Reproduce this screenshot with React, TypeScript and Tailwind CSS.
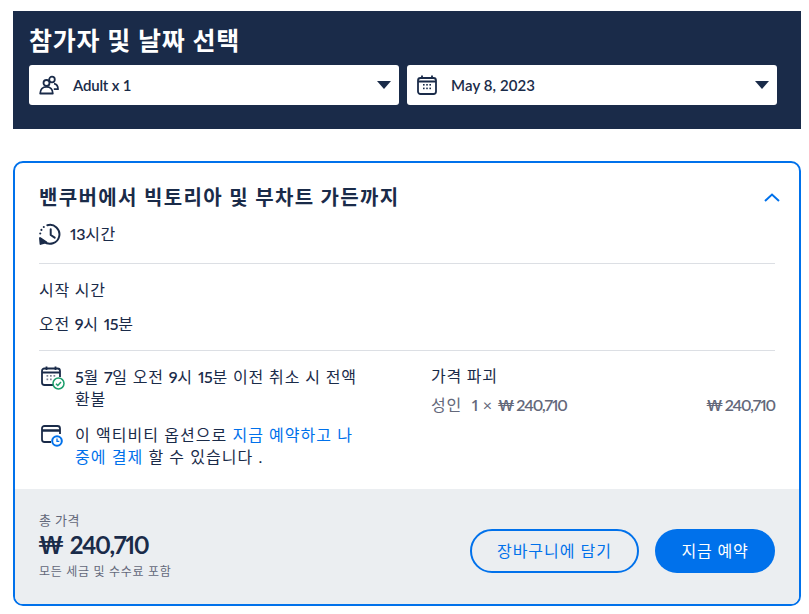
const font = "font-['Lato','Noto_Sans_CJK_KR',sans-serif]";

function N({ children }: { children: React.ReactNode }) {
  return <span className="font-semibold tracking-[-0.3px] proportional-nums">{children}</span>;
}

function Money() {
  return <span className="font-semibold tracking-[-1.15px] proportional-nums">₩ 240,710</span>;
}

function Caret() {
  return (
    <svg width="14" height="8" viewBox="0 0 14 8" className="ml-auto shrink-0">
      <path d="M0 0H14L7 8Z" fill="#1a2b49" />
    </svg>
  );
}

function People() {
  return (
    <svg width="20" height="20" viewBox="0 0 20 20" fill="none" stroke="#1a2b49" strokeWidth="1.8">
      <circle cx="7.5" cy="8" r="3" />
      <circle cx="13" cy="4.5" r="2.8" />
      <path d="M1.200 18.500c0-4 2.500-6.600 6.300-6.600s6.300 2.600 6.300 6.600z" strokeLinejoin="round" />
      <path d="M15 8.700c2.400.4 4 2.400 4 5.500h-4.200" strokeLinejoin="round" />
    </svg>
  );
}

function Calendar() {
  return (
    <svg width="20" height="20" viewBox="0 0 20 20" fill="none" stroke="#1a2b49" strokeWidth="1.800">
      <rect x="1" y="3" width="18" height="16" rx="2.500" />
      <path d="M5 0.500V4M15 0.500V4M1 6.500H19" />
      <g fill="#1a2b49" stroke="none">
        <rect x="6" y="9" width="1.600" height="1.600" />
        <rect x="9.200" y="9" width="1.600" height="1.600" />
        <rect x="12.400" y="9" width="1.600" height="1.600" />
        <rect x="6" y="12.600" width="1.600" height="1.600" />
        <rect x="9.200" y="12.600" width="1.600" height="1.600" />
        <rect x="12.400" y="12.600" width="1.600" height="1.600" />
      </g>
    </svg>
  );
}

function History() {
  return (
    <svg width="23" height="23" viewBox="0 0 22 22" fill="none" stroke="#1a2b49" strokeWidth="1.900">
      <path d="M8 2.200A9 9 0 1 1 4.600 17.600" strokeLinecap="round" />
      <path d="M11.200 6V11.500L15 14" strokeLinecap="round" strokeLinejoin="round" />
      <path d="M1 14.500L1.500 20L7 18.500Z" strokeLinejoin="round" fill="#1a2b49" />
      <g fill="#1a2b49" stroke="none">
        <circle cx="4.600" cy="3.800" r="1" />
        <circle cx="2.300" cy="6.600" r="1" />
        <circle cx="1.200" cy="10" r="1" />
      </g>
    </svg>
  );
}

function CalendarCheck() {
  return (
    <svg width="24" height="24" viewBox="0 0 24 24" fill="none" className="shrink-0">
      <path d="M13 19H3.500A2.500 2.500 0 0 1 1 16.500V5A2.500 2.500 0 0 1 3.500 2.500H16.500A2.500 2.500 0 0 1 19 5V11" stroke="#1a2b49" strokeWidth="1.800" />
      <path d="M5.500 0.500V4M14.500 0.500V4M1 6.500H19" stroke="#1a2b49" strokeWidth="1.800" />
      <g fill="#7b8494">
        <rect x="5.500" y="9" width="1.700" height="1.700" />
        <rect x="9" y="9" width="1.700" height="1.700" />
        <rect x="12.500" y="9" width="1.700" height="1.700" />
        <rect x="5.500" y="12.500" width="1.700" height="1.700" />
        <rect x="9" y="12.500" width="1.700" height="1.700" />
      </g>
      <circle cx="17.500" cy="17.500" r="5.500" fill="#fff" stroke="#1b9e6b" strokeWidth="1.500" />
      <path d="M15 17.700L16.800 19.500L20 15.900" stroke="#1b9e6b" strokeWidth="1.500" />
    </svg>
  );
}

function CardClock() {
  return (
    <svg width="24" height="24" viewBox="0 0 24 24" fill="none" className="shrink-0">
      <path d="M10 18H3.500A2.500 2.500 0 0 1 1 15.500V4.500A2.500 2.500 0 0 1 3.500 2H16.500A2.500 2.500 0 0 1 19 4.500V10" stroke="#1a2b49" strokeWidth="1.800" />
      <path d="M1 6.500H19" stroke="#1a2b49" strokeWidth="2.500" />
      <circle cx="16" cy="17" r="5.800" fill="#0071eb" />
      <circle cx="16" cy="17" r="3.800" fill="#fff" />
      <path d="M16 14.500V17.300H18.300" stroke="#0071eb" strokeWidth="1.300" />
    </svg>
  );
}

const body = "text-[16px] tracking-[0.75px] leading-[22px]";

export default function App() {
  return (
    <div className={`${font} bg-white min-h-[614px] w-[809px] pt-[11px] px-[13px] text-[#1a2b49]`}>
      <div className="w-[788px] h-[118px] bg-[#1a2b49] px-4 pt-[12px]">
        <h2 className="text-[25px] tracking-[0.8px] leading-[34px] font-bold text-white">참가자 및 날짜 선택</h2>
        <div className="flex gap-2 mt-[8px]">
          <div className="flex items-center w-[370px] h-10 bg-white rounded-[3px] pl-[10px] pr-2">
            <People />
            <span className="ml-[14px] text-[15px] font-semibold tracking-[-0.2px]">Adult x 1</span>
            <Caret />
          </div>
          <div className="flex items-center w-[370px] h-10 bg-white rounded-[3px] pl-[10px] pr-2">
            <Calendar />
            <span className="ml-[14px] text-[15px] font-semibold tracking-[0.1px]">May 8, 2023</span>
            <Caret />
          </div>
        </div>
      </div>

      <div className="mt-[32px] w-[788px] h-[445px] border-2 border-[#0071eb] rounded-[10px] overflow-hidden flex flex-col">
        <div className="flex-1 px-6 pt-[21px]">
          <div className="flex items-center justify-between">
            <h3 className="text-[20px] tracking-[1.35px] leading-[26px] font-bold">밴쿠버에서 빅토리아 및 부차트 가든까지</h3>
            <svg width="16" height="9" viewBox="0 0 16 9" fill="none" className="-mr-[5px]">
              <path d="M1 8L8 1.500L15 8" stroke="#0071eb" strokeWidth="2" />
            </svg>
          </div>
          <div className="flex items-center mt-[13px] h-[22px]">
            <History />
            <span className={`ml-[8px] ${body}`}><N>13</N>시간</span>
          </div>
          <div className="h-px bg-[#dcdfe4] mt-[18px] w-[736px]" />
          <div className={`mt-[15px] ${body}`}>시작 시간</div>
          <div className={`mt-[12px] ${body}`}>오전 <N>9</N>시 <N>15</N>분</div>
          <div className="h-px bg-[#dcdfe4] mt-[15px] w-[736px]" />
          <div className="flex mt-[15px] w-[736px]">
            <div className="w-[340px] text-[16px] leading-[22px]">
              <div className="flex gap-[10px] pl-[2px] tracking-[0.85px]">
                <CalendarCheck />
                <span>
                  <N>5</N>월 <N>7</N>일 오전 <N>9</N>시 <N>15</N>분 이전 취소 시 전액<br />환불
                </span>
              </div>
              <div className="flex gap-[10px] pl-[2px] mt-[14px] tracking-[1.05px]">
                <CardClock />
                <span>
                  이 액티비티 옵션으로 <span className="text-[#0071eb]">지금 예약하고 나<br />중에 결제</span> 할 수 있습니다 .
                </span>
              </div>
            </div>
            <div className={`ml-[52px] flex-1 ${body} -mt-[1px]`}>
              <div>가격 파괴</div>
              <div className="flex justify-between mt-[7px] text-[#63687a]">
                <span>성인 &nbsp;<N>1</N> × <Money /></span>
                <Money />
              </div>
            </div>
          </div>
        </div>

        <div className="h-[115px] bg-[#ebeef1] px-6 flex justify-between">
          <div className="pt-[23px]">
            <div className="text-[13px] tracking-[0.4px] leading-[16px] text-[#63687a]">총 가격</div>
            <div className="text-[24px] leading-[32px] font-bold proportional-nums mt-[1px] -ml-[1px]">₩ <span className="tracking-[-1.4px]">240,710</span></div>
            <div className="text-[12px] tracking-[0.7px] leading-[16px] text-[#63687a] mt-[3px]">모든 세금 및 수수료 포함</div>
          </div>
          <div className="flex gap-4 pt-[40px]">
            <button className="w-[169px] h-11 rounded-full border-2 border-[#0071eb] text-[#0071eb] text-[16px] tracking-[1px]">장바구니에 담기</button>
            <button className="w-[120px] h-11 rounded-full bg-[#0071eb] text-white text-[16px] tracking-[0.8px]">지금 예약</button>
          </div>
        </div>
      </div>
    </div>
  );
}
